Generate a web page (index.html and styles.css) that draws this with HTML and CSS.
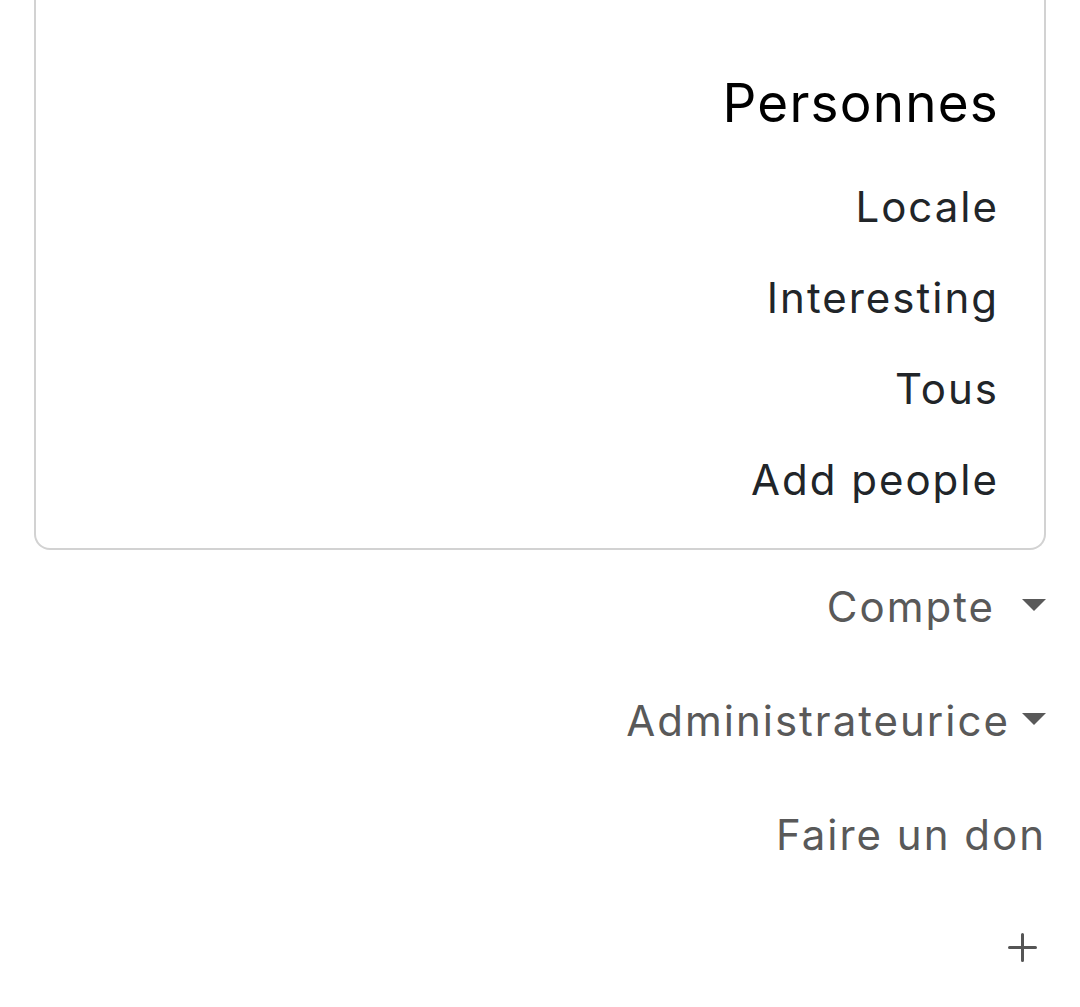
FILE: index.html
```html
<!DOCTYPE html>
<html lang="fr">
<head>
<meta charset="utf-8">
<title>Menu</title>
<link rel="stylesheet" href="styles.css">
</head>
<body>
<div class="wrap">
  <div class="card">
    <div class="card-title">Personnes</div>
    <ul class="card-list">
      <li class="card-item">Locale</li>
      <li class="card-item">Interesting</li>
      <li class="card-item">Tous</li>
      <li class="card-item">Add people</li>
    </ul>
  </div>
  <ul class="nav">
    <li class="nav-item"><span class="nav-text">Compte</span><span class="caret caret-wide"></span></li>
    <li class="nav-item"><span class="nav-text">Administrateurice</span><span class="caret"></span></li>
    <li class="nav-item"><span class="nav-text">Faire un don</span></li>
    <li class="nav-item nav-plus">
      <svg class="plus" width="29" height="29" viewBox="0 0 29 29"><path d="M14.5 1.5v26M1.5 14.5h26" stroke="#555" stroke-width="3" stroke-linecap="round" fill="none"/></svg>
    </li>
  </ul>
</div>
</body>
</html>
```

FILE: styles.css
```css
html, body {
  margin: 0;
  padding: 0;
  background: #fff;
}
body {
  font-family: Inter, "Noto Sans", sans-serif;
  overflow: hidden;
}
.wrap {
  padding: 0 34px;
}
.card {
  border: 2px solid #d2d2d2;
  border-top: 0;
  border-radius: 0 0 16px 16px;
  padding: 71px 45px 23px 47px;
  text-align: right;
}
.card-title {
  font-size: 53px;
  line-height: 64px;
  color: #000;
  margin-bottom: 26px;
  letter-spacing: 1.2px;
}
.card-list {
  list-style: none;
  margin: 0;
  padding: 0;
}
.card-item {
  font-size: 42px;
  line-height: 91px;
  color: #212529;
  letter-spacing: 2px;
}
.nav {
  list-style: none;
  margin: 0;
  padding: 0;
}
.nav-item {
  display: flex;
  justify-content: flex-end;
  align-items: baseline;
  font-size: 42px;
  line-height: 114px;
  height: 114px;
  color: #595959;
  letter-spacing: 2px;
}
.caret {
  display: inline-block;
  width: 0;
  height: 0;
  border-top: 12.6px solid #595959;
  border-left: 12.8px solid transparent;
  border-right: 12.8px solid transparent;
  margin-left: 12px;
  position: relative;
  top: -10.7px;
}
.caret-wide {
  margin-left: 27px;
}
.nav-plus {
  align-items: center;
  padding-right: 9px;
  padding-bottom: 4px;
  box-sizing: border-box;
}
.plus {
  display: block;
}
```
